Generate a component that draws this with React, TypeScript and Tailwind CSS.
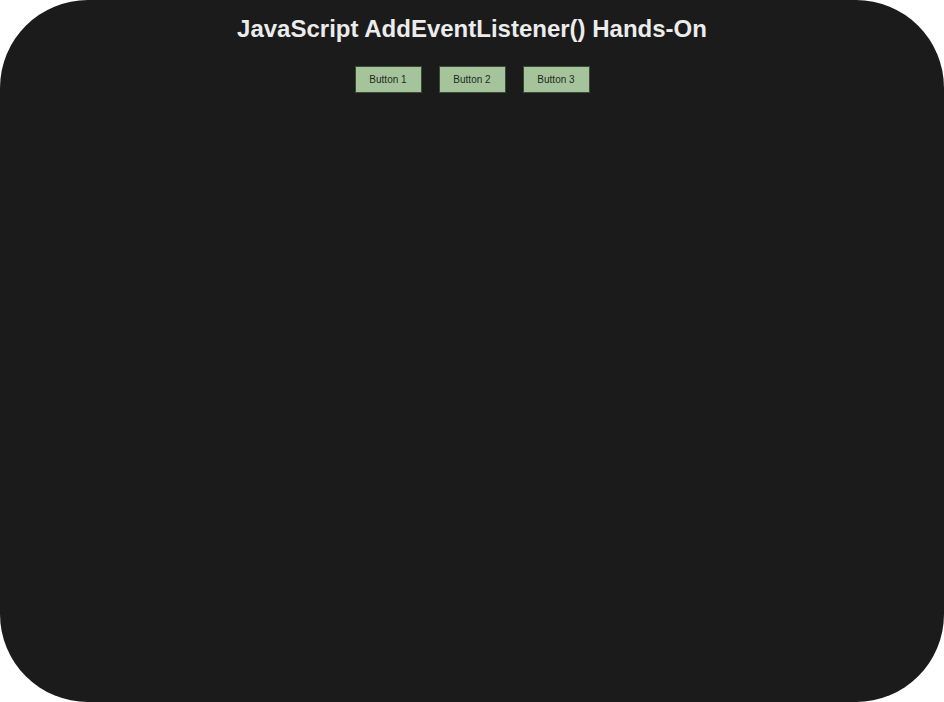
const buttons = ["Button 1", "Button 2", "Button 3"];

export default function App() {
  return (
    <div className="h-[702px] w-[944px] bg-white">
      <div className="flex h-full w-full flex-col items-center rounded-[88px] bg-[#1b1b1b] font-['Liberation_Sans',Arial,sans-serif]">
        <h1 className="mt-[15px] text-[24px] font-bold leading-[28px] text-[#ececec]">
          JavaScript AddEventListener() Hands-On
        </h1>
        <div className="mt-[23px] flex gap-[17px]">
          {buttons.map((b) => (
            <button
              key={b}
              className="flex h-[27px] w-[67px] items-center justify-center border border-[#3a4a38] bg-[#a6c49c] text-[10px] text-[#1e2a1e]"
            >
              {b}
            </button>
          ))}
        </div>
      </div>
    </div>
  );
}
